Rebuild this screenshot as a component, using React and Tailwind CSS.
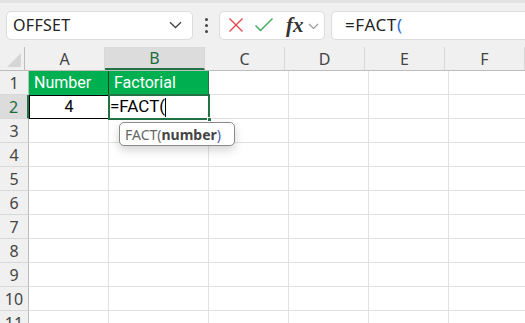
import React from 'react';

const COLS = [
  { key: 'A', w: 'w-[80px]' },
  { key: 'B', w: 'w-[100px]' },
  { key: 'C', w: 'w-[80px]' },
  { key: 'D', w: 'w-[80px]' },
  { key: 'E', w: 'w-[80px]' },
  { key: 'F', w: 'w-[80px]' },
];

const ROWS = [1, 2, 3, 4, 5, 6, 7, 8, 9, 10, 11];

const uiFont = { fontFamily: '"Noto Sans", "Open Sans", sans-serif' };

const Toolbar = () => (
  <div className="h-[47px] bg-[#f0f0f0] border-t-[3px] border-[#e2e2e2] flex items-center pl-[6px]" style={uiFont}>
    {/* name box */}
    <div className="w-[187px] h-[29px] bg-white border border-[#dcdcdc] rounded-[5px] flex items-center justify-between pl-[6px] pr-[10px]">
      <span className="text-[16px] text-[#222] tracking-[0.3px]">OFFSET</span>
      <svg width="13" height="8" viewBox="0 0 13 8" fill="none">
        <path d="M1 1.2 L6.5 6.5 L12 1.2" stroke="#444" strokeWidth="1.3" />
      </svg>
    </div>
    {/* dots */}
    <div className="w-[26px] flex flex-col items-center gap-[3px]">
      <span className="w-[3px] h-[3px] bg-[#444] rounded-full" />
      <span className="w-[3px] h-[3px] bg-[#444] rounded-full" />
      <span className="w-[3px] h-[3px] bg-[#444] rounded-full" />
    </div>
    {/* cancel / enter / fx */}
    <div className="w-[106px] h-[29px] bg-white border border-[#dcdcdc] rounded-[5px] flex items-center pl-[8px]">
      <svg width="16" height="16" viewBox="0 0 16 16" fill="none">
        <path d="M1.5 1.5 L14.5 14.5 M14.5 1.5 L1.5 14.5" stroke="#e5484d" strokeWidth="1.4" />
      </svg>
      <svg width="20" height="16" viewBox="0 0 20 16" fill="none" className="ml-[10px]">
        <path d="M1.5 8.5 L6.5 13.5 L18.5 1.5" stroke="#3aa657" strokeWidth="1.4" />
      </svg>
      <span className="ml-[12px] text-[21px] leading-none italic font-bold text-[#333]" style={{ fontFamily: '"Liberation Serif", serif' }}>
        fx
      </span>
      <svg width="11" height="7" viewBox="0 0 11 7" fill="none" className="ml-[4px] mt-[2px]">
        <path d="M1 1 L5.5 5.5 L10 1" stroke="#999" strokeWidth="1.2" />
      </svg>
    </div>
    {/* formula input */}
    <div className="ml-[6px] flex-1 h-[29px] bg-white border border-r-0 border-[#dcdcdc] rounded-l-[5px] flex items-center pl-[13px]">
      <span className="text-[17px] text-[#222] tracking-[0.6px]">
        =FACT<span className="text-[#2f6fd6]">(</span>
      </span>
    </div>
  </div>
);

const HeaderRow = () => (
  <div className="flex h-[24px] border-b border-[#bdbdbd] bg-[#f0f0f0]" style={uiFont}>
    <div className="w-[29px] h-full border-r border-[#bdbdbd] relative">
      <svg width="14" height="14" viewBox="0 0 14 14" className="absolute right-[3px] bottom-[3px]">
        <path d="M14 0 L14 14 L0 14 Z" fill="#d6d6d6" />
      </svg>
    </div>
    {COLS.map((c) => (
      <div
        key={c.key}
        className={`${c.w} shrink-0 h-full flex items-center justify-center text-[16px] border-r border-[#d8d8d8] ${
          c.key === 'B' ? 'bg-[#dcdcdc] text-[#1e6b3c] border-b-2 border-b-[#217346]' : 'text-[#444]'
        }`}
      >
        {c.key}
      </div>
    ))}
  </div>
);

const cellFont = { fontFamily: 'Roboto, "Liberation Sans", sans-serif' };

const Cell = ({ row, col }) => {
  const base = `${col.w} shrink-0 h-full border-r border-b border-[#e1e1e1] flex items-center text-[16px]`;
  if (row === 1 && col.key === 'A')
    return <div className={`${col.w} shrink-0 h-full bg-[#00b050] border-r border-[#1f3b28] flex items-center pl-[5px] text-white text-[16px]`}>Number</div>;
  if (row === 1 && col.key === 'B')
    return <div className={`${col.w} shrink-0 h-full bg-[#00b050] border-r border-[#217346] flex items-center pl-[5px] text-white text-[16px]`}>Factorial</div>;
  if (row === 2 && col.key === 'A')
    return <div className={`${col.w} shrink-0 h-full border border-black flex items-center justify-center text-[16px] text-black`}>4</div>;
  if (row === 2 && col.key === 'B')
    return (
      <div className={`${col.w} shrink-0 h-full relative flex items-center text-black`}>
        <div className="absolute -left-[1px] -top-[1px] w-[102px] h-[26px] border-2 border-[#217346]" />
        <div className="absolute right-[-3px] bottom-[-3px] w-[5px] h-[5px] bg-[#217346] border border-white" />
        <span className="pl-[1px] text-[17px]">=FACT(</span>
        <span className="w-[1px] h-[19px] bg-black" />
        {/* argument tooltip */}
        <div className="absolute left-[10px] top-[27px] w-[116px] h-[24px] bg-white border border-[#8a8a8a] rounded-[5px] shadow-[0_4px_10px_rgba(0,0,0,0.18)] flex items-center pl-[5px] text-[14px] z-10" style={uiFont}>
          <span className="text-[#666]">FACT(</span>
          <span className="font-bold text-[#444]">number</span>
          <span className="text-[#4a5bb8]">)</span>
        </div>
      </div>
    );
  return <div className={base} />;
};

const Row = ({ n }) => (
  <div className="flex h-[24px]" style={cellFont}>
    <div
      className={`w-[29px] shrink-0 h-full flex items-center justify-center text-[16px] border-b border-[#d8d8d8] ${
        n === 2 ? 'bg-[#dcdcdc] text-[#1e6b3c] border-r-2 border-r-[#217346]' : 'bg-[#f0f0f0] text-[#444] border-r border-r-[#bdbdbd]'
      }`}
      style={uiFont}
    >
      {n}
    </div>
    {COLS.map((c) => (
      <Cell key={c.key} row={n} col={c} />
    ))}
  </div>
);

export default function App() {
  return (
    <div className="w-[525px] h-[323px] overflow-hidden bg-white">
      <Toolbar />
      <HeaderRow />
      {ROWS.map((n) => (
        <Row key={n} n={n} />
      ))}
    </div>
  );
}
